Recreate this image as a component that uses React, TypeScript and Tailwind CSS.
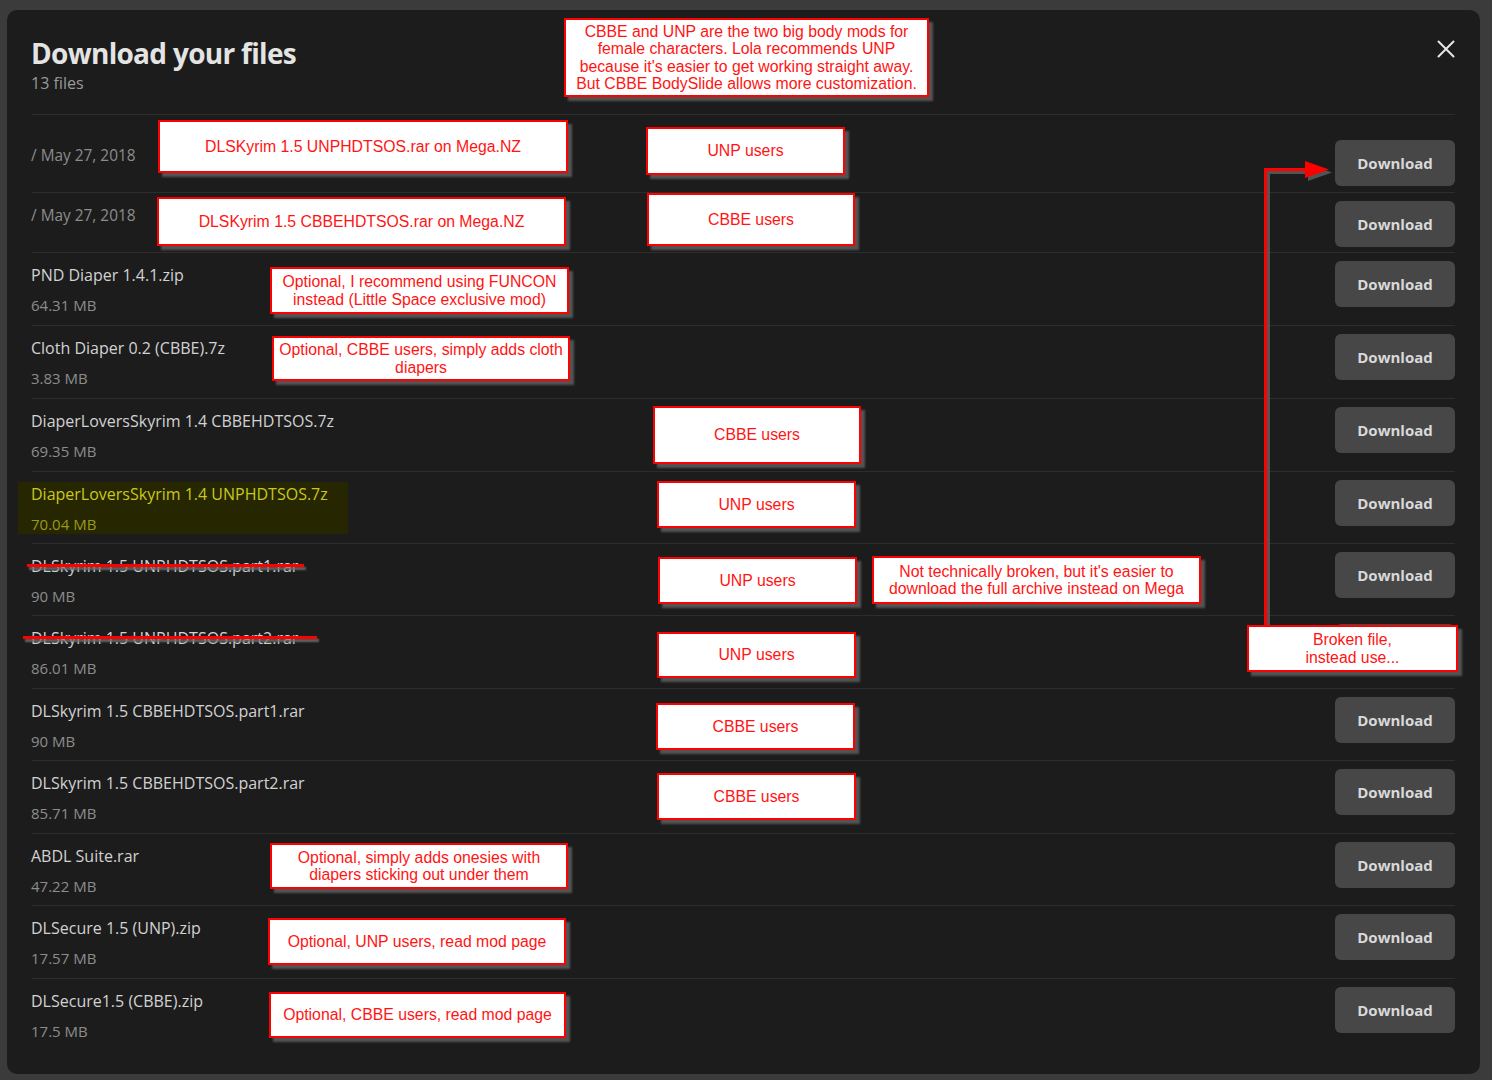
import React from "react";

type Row = {
  kind: "date" | "file";
  name?: string;
  size?: string;
  date?: string;
  h: string;
  highlight?: boolean;
  strike?: { left: number; width: number };
  textTop?: string;
  btnTop?: string;
  covered?: boolean;
};

const rows: Row[] = [
  { kind: "date", date: "/ May 27, 2018", h: "h-[78px]", textTop: "pt-[30px]", btnTop: "mt-[25px]" },
  { kind: "date", date: "/ May 27, 2018", h: "h-[60px]", textTop: "pt-[12px]", btnTop: "mt-[8px]" },
  { kind: "file", name: "PND Diaper 1.4.1.zip", size: "64.31 MB", h: "h-[73px]" },
  { kind: "file", name: "Cloth Diaper 0.2 (CBBE).7z", size: "3.83 MB", h: "h-[73px]" },
  { kind: "file", name: "DiaperLoversSkyrim 1.4 CBBEHDTSOS.7z", size: "69.35 MB", h: "h-[73px]" },
  { kind: "file", name: "DiaperLoversSkyrim 1.4 UNPHDTSOS.7z", size: "70.04 MB", h: "h-[72px]", highlight: true },
  { kind: "file", name: "DLSkyrim 1.5 UNPHDTSOS.part1.rar", size: "90 MB", h: "h-[72px]", strike: { left: -4, width: 277 } },
  { kind: "file", name: "DLSkyrim 1.5 UNPHDTSOS.part2.rar", size: "86.01 MB", h: "h-[73px]", strike: { left: -8, width: 294 }, covered: true },
  { kind: "file", name: "DLSkyrim 1.5 CBBEHDTSOS.part1.rar", size: "90 MB", h: "h-[72px]" },
  { kind: "file", name: "DLSkyrim 1.5 CBBEHDTSOS.part2.rar", size: "85.71 MB", h: "h-[73px]" },
  { kind: "file", name: "ABDL Suite.rar", size: "47.22 MB", h: "h-[72px]" },
  { kind: "file", name: "DLSecure 1.5 (UNP).zip", size: "17.57 MB", h: "h-[73px]" },
  { kind: "file", name: "DLSecure1.5 (CBBE).zip", size: "17.5 MB", h: "h-[72px]" },
];

type Note = { l: number; t: number; w: number; h: number; lines: string[] };

const notes: Note[] = [
  {
    l: 557, t: 8, w: 365, h: 79,
    lines: [
      "CBBE and UNP are the two big body mods for",
      "female characters. Lola recommends UNP",
      "because it's easier to get working straight away.",
      "But CBBE BodySlide allows more customization.",
    ],
  },
  { l: 151, t: 110, w: 410, h: 53, lines: ["DLSKyrim 1.5 UNPHDTSOS.rar on Mega.NZ"] },
  { l: 639, t: 117, w: 199, h: 48, lines: ["UNP users"] },
  { l: 150, t: 187, w: 409, h: 49, lines: ["DLSKyrim 1.5 CBBEHDTSOS.rar on Mega.NZ"] },
  { l: 640, t: 183, w: 208, h: 53, lines: ["CBBE users"] },
  { l: 263, t: 257, w: 299, h: 47, lines: ["Optional, I recommend using FUNCON", "instead (Little Space exclusive mod)"] },
  { l: 265, t: 326, w: 298, h: 45, lines: ["Optional, CBBE users, simply adds cloth", "diapers"] },
  { l: 646, t: 396, w: 208, h: 58, lines: ["CBBE users"] },
  { l: 650, t: 471, w: 199, h: 47, lines: ["UNP users"] },
  { l: 651, t: 547, w: 199, h: 47, lines: ["UNP users"] },
  { l: 865, t: 546, w: 329, h: 48, lines: ["Not technically broken, but it's easier to", "download the full archive instead on Mega"] },
  { l: 650, t: 622, w: 199, h: 46, lines: ["UNP users"] },
  { l: 1240, t: 615, w: 211, h: 47, lines: ["Broken file,", "instead use..."] },
  { l: 649, t: 693, w: 199, h: 47, lines: ["CBBE users"] },
  { l: 650, t: 763, w: 199, h: 47, lines: ["CBBE users"] },
  { l: 263, t: 833, w: 298, h: 46, lines: ["Optional, simply adds onesies with", "diapers sticking out under them"] },
  { l: 261, t: 908, w: 298, h: 47, lines: ["Optional, UNP users, read mod page"] },
  { l: 262, t: 982, w: 297, h: 46, lines: ["Optional, CBBE users, read mod page"] },
];

function Annotation({ n }: { n: Note }) {
  return (
    <div
      className="absolute flex flex-col items-center justify-center border-2 border-[#ff0000] bg-white text-center text-[15.8px] leading-[17.5px] text-[#ff1414] shadow-[4px_4px_2px_rgba(90,90,90,0.9)]"
      style={{ left: n.l, top: n.t, width: n.w, height: n.h, fontFamily: '"Liberation Sans", Arial, sans-serif' }}
    >
      {n.lines.map((line, i) => (
        <div key={i} className="whitespace-nowrap">
          {line}
        </div>
      ))}
    </div>
  );
}

function DownloadButton({ top, covered }: { top: string; covered?: boolean }) {
  return (
    <button
      aria-label="Download"
      className={`${top} flex h-[46px] w-[120px] shrink-0 items-center justify-center rounded-[6px] bg-[#474747] text-[15px] font-bold text-[#d9d9d9]`}
    >
      {covered ? null : "Download"}
    </button>
  );
}

function FileRow({ r }: { r: Row }) {
  if (r.kind === "date") {
    return (
      <div className={`flex ${r.h} items-start justify-between border-t border-[#2d2d2d]`}>
        <div className={`${r.textTop} -ml-px text-[15.4px] leading-[22px] text-[#8c8c8c]`}>{r.date}</div>
        <DownloadButton top={r.btnTop || "mt-[8px]"} />
      </div>
    );
  }
  const nameColor = r.highlight ? "text-[#c9c91c]" : "text-[#d2d2d2]";
  const sizeColor = r.highlight ? "text-[#9a9a1a]" : "text-[#8c8c8c]";
  return (
    <div className={`flex ${r.h} items-start justify-between border-t border-[#2d2d2d]`}>
      <div
        className={
          r.highlight
            ? "mt-[10px] -ml-[14px] h-[52px] w-[330px] bg-[#262600] pl-[13px]"
            : "pt-[10px] -ml-px"
        }
      >
        <div className={`relative text-[16px] leading-[24px] ${nameColor}`}>
          <span className="relative inline-block">
            {r.name}
            {r.strike && (
              <span
                className="absolute top-[10px] h-[3px] bg-[#ff0000] shadow-[2px_3px_2px_rgba(110,110,110,0.9)]"
                style={{ left: r.strike.left, width: r.strike.width }}
              />
            )}
          </span>
        </div>
        <div className={`mt-[8px] text-[15px] leading-[20px] ${sizeColor}`}>{r.size}</div>
      </div>
      <DownloadButton top="mt-[8px]" covered={r.covered} />
    </div>
  );
}

export default function App() {
  return (
    <div
      className="min-h-screen bg-[#3b3b3b] pl-[7px] pt-[10px]"
      style={{ fontFamily: '"Open Sans", "Noto Sans", sans-serif' }}
    >
      <div className="relative w-[1473px] rounded-[10px] bg-[#1c1c1c] pl-[25px] pr-[25px] pb-[24px]">
        <div className="flex h-[104px] items-start justify-between">
          <div className="pt-[25px]">
            <h1 className="-ml-px text-[28px] font-bold leading-[36px] tracking-[-0.7px] text-[#e4e4e4]">
              Download your files
            </h1>
            <div className="mt-px -ml-px text-[16px] leading-[22px] text-[#9a9a9a]">13 files</div>
          </div>
          <button className="mt-[30px] flex h-[18px] w-[18px] items-center justify-center text-[#e6e6e6]">
            <svg width="18" height="18" viewBox="0 0 18 18" fill="none" stroke="currentColor" strokeWidth="2" strokeLinecap="round">
              <path d="M1.5 1.5 L16.5 16.5 M16.5 1.5 L1.5 16.5" />
            </svg>
          </button>
        </div>

        <div>
          {rows.map((r, i) => (
            <FileRow key={i} r={r} />
          ))}
        </div>

        {/* red connector arrow (annotation) */}
        <svg
          className="absolute"
          style={{ left: 1248, top: 145 }}
          width="85"
          height="475"
          viewBox="0 0 85 475"
        >
          <g fill="#5a5a5a" stroke="#5a5a5a" opacity="0.9">
            <line x1="13.5" y1="18" x2="13.5" y2="472" strokeWidth="3" />
            <line x1="12" y1="17.5" x2="53" y2="17.5" strokeWidth="3" />
            <polygon points="53,9 77,17.5 53,26" stroke="none" />
          </g>
          <g fill="#ff0000" stroke="#ff0000">
            <line x1="10.5" y1="14" x2="10.5" y2="470" strokeWidth="3" />
            <line x1="9" y1="14.5" x2="52" y2="14.5" strokeWidth="3" />
            <polygon points="50,6 74,14.5 50,23" stroke="none" />
          </g>
        </svg>

        {notes.map((n, i) => (
          <Annotation key={i} n={n} />
        ))}
      </div>
    </div>
  );
}
